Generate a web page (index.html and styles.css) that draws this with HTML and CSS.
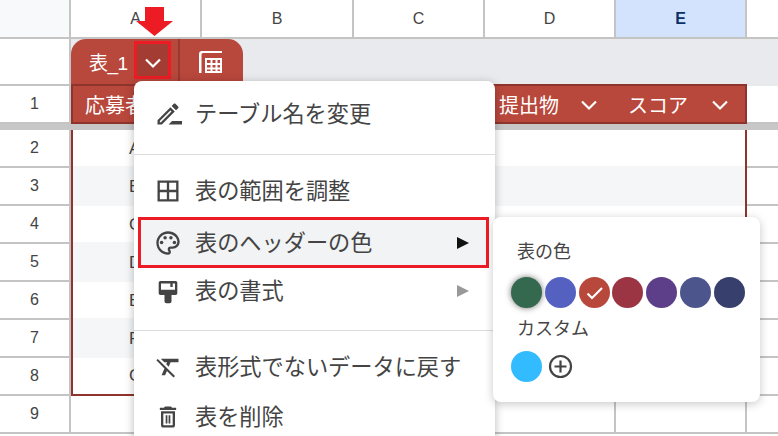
FILE: index.html
```html
<!DOCTYPE html>
<html lang="ja">
<head>
    <meta charset="UTF-8">
    <title>表のヘッダーの色</title>
    <link rel="stylesheet" href="styles.css">
</head>
<body>

<div class="sheet">
    <!-- column letters -->
    <div class="row row-head">
        <div class="num corner"></div>
        <div class="cell">A</div>
        <div class="cell">B</div>
        <div class="cell">C</div>
        <div class="cell">D</div>
        <div class="cell cell-selected">E</div>
        <div class="cell cell-last"></div>
    </div>

    <!-- table tab -->
    <div class="row-tab">
        <div class="num num-tab"></div>
        <div class="band">
            <div class="tab">
                <span class="tab-name">表_1</span>
                <span class="tab-btn">
                    <svg width="18" height="18" viewBox="0 0 18 18"><path class="chev" d="M2 5.500L9 12.500l7-7"/></svg>
                </span>
                <span class="tab-calc">
                    <svg width="26" height="26" viewBox="0 0 26 26" fill="#fff">
                        <path d="M5 2h19v2H5a1.500 1.500 0 0 0-1.500 1.500V24h-2.500V5a3 3 0 0 1 3-3z"/>
                        <path fill-rule="evenodd" d="M7 9h17v15H7zM9 11v3h3.500v-3zM14.500 11v3h3v-3zM19.500 11v3h2.500v-3zM9 16v2.500h3.500V16zM14.500 16v2.500h3V16zM19.500 16v2.500h2.500V16zM9 20.500V22h3.500v-1.500zM14.500 20.500V22h3v-1.500zM19.500 20.500V22h2.500v-1.500z"/>
                    </svg>
                </span>
            </div>
        </div>
    </div>

    <!-- table header -->
    <div class="row row-first">
        <div class="num">1</div>
        <div class="table-head">
            <div class="th"><span>応募者</span></div>
            <div class="th"></div>
            <div class="th"></div>
            <div class="th"><span>提出物</span><svg width="18" height="18" viewBox="0 0 18 18"><path class="chev" d="M2 5.500L9 12.500l7-7"/></svg></div>
            <div class="th th-last"><span>スコア</span><svg width="18" height="18" viewBox="0 0 18 18"><path class="chev" d="M2 5.500L9 12.500l7-7"/></svg></div>
        </div>
        <div class="cell cell-last cell-band"></div>
    </div>

    <div class="freeze"></div>

    <div class="row"><div class="num">2</div><div class="td">A</div><div class="cell cell-last"></div></div>
    <div class="row"><div class="num">3</div><div class="td td-alt">B</div><div class="cell cell-last"></div></div>
    <div class="row"><div class="num">4</div><div class="td">C</div><div class="cell cell-last"></div></div>
    <div class="row"><div class="num">5</div><div class="td td-alt">D</div><div class="cell cell-last"></div></div>
    <div class="row"><div class="num">6</div><div class="td">E</div><div class="cell cell-last"></div></div>
    <div class="row"><div class="num">7</div><div class="td td-alt">F</div><div class="cell cell-last"></div></div>
    <div class="row"><div class="num">8</div><div class="td td-end">G</div><div class="cell cell-last"></div></div>
    <div class="row">
        <div class="num">9</div>
        <div class="cell"></div>
        <div class="cell"></div>
        <div class="cell"></div>
        <div class="cell"></div>
        <div class="cell"></div>
        <div class="cell cell-last"></div>
    </div>

    <!-- red arrow annotation -->
    <svg class="pointer" width="38" height="30" viewBox="0 0 38 30"><polygon points="9,0 28,0 28,14 37,14 18.500,29 0,14 9,14" fill="#ed1c24"/></svg>

    <!-- dropdown menu -->
    <div class="menu">
        <div class="item">
            <svg class="ico" viewBox="0 0 24 24"><path d="M14.060 9.020l.92.92L5.920 19H5v-.92l9.060-9.060M17.660 3c-.25 0-.51.1-.7.29l-1.830 1.830 3.750 3.750 1.830-1.830c.39-.39.39-1.020 0-1.410l-2.340-2.340c-.2-.2-.45-.29-.71-.29zm-3.600 3.190L3 17.250V21h3.750L17.810 9.940l-3.750-3.750z"/><path d="M12.500 21l3-3H24v3z"/></svg>
            <span class="label">テーブル名を変更</span>
        </div>
        <div class="sep sep-first"></div>
        <div class="item">
            <svg class="ico" viewBox="0 0 24 24"><path d="M3 3v18h18V3H3zm8 16H5v-6h6v6zm0-8H5V5h6v6zm8 8h-6v-6h6v6zm0-8h-6V5h6v6z"/></svg>
            <span class="label">表の範囲を調整</span>
        </div>
        <div class="item item-active">
            <svg class="ico" viewBox="0 0 24 24"><path d="M12 22C6.490 22 2 17.510 2 12S6.490 2 12 2s10 4.040 10 9c0 3.310-2.690 6-6 6h-1.770c-.28 0-.5.22-.5.5 0 .12.05.23.13.33.41.47.64 1.060.64 1.670A2.500 2.500 0 0 1 12 22zm0-18c-4.410 0-8 3.590-8 8s3.590 8 8 8c.28 0 .5-.22.5-.5a.54.54 0 0 0-.14-.35c-.41-.46-.63-1.050-.63-1.650a2.500 2.500 0 0 1 2.500-2.500H16c2.210 0 4-1.790 4-4 0-3.860-3.590-7-8-7z"/><circle cx="6.500" cy="11.500" r="1.500"/><circle cx="9.500" cy="7.500" r="1.500"/><circle cx="14.500" cy="7.500" r="1.500"/><circle cx="17.500" cy="11.500" r="1.500"/></svg>
            <span class="label">表のヘッダーの色</span>
            <span class="tri"></span>
        </div>
        <div class="item">
            <svg class="ico" viewBox="0 0 24 24"><path fill-rule="evenodd" d="M5.500 3.500h13a1.500 1.500 0 0 1 1.500 1.500v9a1.500 1.500 0 0 1-1.500 1.500H15v5.500a1.500 1.500 0 0 1-1.500 1.500h-3A1.500 1.500 0 0 1 9 21v-5.500H5.500A1.500 1.500 0 0 1 4 14V5a1.500 1.500 0 0 1 1.500-1.500zM6 5.500V11h12V5.500h-2v3h-2v-3z"/></svg>
            <span class="label">表の書式</span>
            <span class="tri tri-off"></span>
        </div>
        <div class="sep sep-second"></div>
        <div class="item">
            <svg class="ico" viewBox="0 0 24 24"><path d="M6 5v.18L8.820 8h2.400l-.72 1.680 2.100 2.100L14.210 8H21V5H6zm-2.730.04L2 6.310l6.970 6.970L6.500 19h3l1.570-3.660L16.730 21 18 19.730 3.270 5.040z"/></svg>
            <span class="label">表形式でないデータに戻す</span>
        </div>
        <div class="item">
            <svg class="ico" viewBox="0 0 24 24"><path d="M16 9v10H8V9h8m-1.500-6h-5l-1 1H5v2h14V4h-3.500l-1-1zM18 7H6v12c0 1.100.9 2 2 2h8c1.100 0 2-.9 2-2V7z"/><path d="M10 10.500h1.500v7H10zM12.500 10.500H14v7h-1.500z"/></svg>
            <span class="label">表を削除</span>
        </div>
    </div>

    <!-- colour submenu -->
    <div class="submenu">
        <div class="sub-title">表の色</div>
        <div class="swatches">
            <span class="dot dot-hover" style="background:#34684f"></span>
            <span class="dot" style="background:#5561c0"></span>
            <span class="dot" style="background:#b8473c">
                <svg width="31" height="31" viewBox="0 0 31 31"><path d="M8.500 16.500l4.500 4.500 10-10" fill="none" stroke="#fff" stroke-width="2.200"/></svg>
            </span>
            <span class="dot" style="background:#9b3544"></span>
            <span class="dot" style="background:#5d3e88"></span>
            <span class="dot" style="background:#4c568c"></span>
            <span class="dot" style="background:#37406c"></span>
        </div>
        <div class="sub-title sub-title-2">カスタム</div>
        <div class="swatches swatches-custom">
            <span class="dot" style="background:#33bbff"></span>
            <span class="dot">
                <svg width="31" height="31" viewBox="0 0 31 31"><circle cx="15.500" cy="15.500" r="10.500" fill="none" stroke="#444" stroke-width="2.200"/><path d="M15.500 9.500v12M9.500 15.500h12" stroke="#444" stroke-width="2.200"/></svg>
            </span>
        </div>
    </div>
</div>

</body>
</html>
```

FILE: styles.css
```css
html, body {
    margin: 0;
    padding: 0;
    background: #fff;
}
.sheet {
    position: relative;
    width: 778px;
    height: 436px;
    overflow: hidden;
    background: #fff;
    font-family: "Liberation Sans", "Noto Sans CJK JP", sans-serif;
    color: #444;
}
.row {
    display: grid;
    grid-template-columns: 71px 131px 152px 131px 131px 131px 1fr;
    height: 38px;
}
.row-head {
    height: 39px;
}
.row-first {
    height: 40px;
}
.num, .cell {
    box-sizing: border-box;
    display: flex;
    align-items: center;
    justify-content: center;
    border-right: 2px solid #c4c4c4;
    border-bottom: 2px solid #c4c4c4;
    font-size: 16px;
}
.row-first .num {
    padding-bottom: 1px;
    border-top: 2px solid #c4c4c4;
}
.num-tab {
    border-bottom: none;
}
.corner {
    background: #f8f9fa;
}
.cell-selected {
    background: #d3e3fd;
    color: #0b2f66;
    font-weight: bold;
}
.cell-last {
    border-right: none;
}
.cell-band {
    border-top: 2px solid #e8eaed;
}

/* tab row */
.row-tab {
    display: grid;
    grid-template-columns: 71px 1fr;
    height: 45px;
}
.band {
    background: #e8eaed;
}
.tab {
    display: flex;
    align-items: center;
    width: 172px;
    height: 45px;
    padding-left: 18px;
    box-sizing: border-box;
    background: #b8473c;
    border-radius: 15px 15px 0 0;
    color: #fff;
}
.tab-name {
    width: 45px;
    font-size: 19px;
    letter-spacing: -0.5px;
}
.tab-btn {
    box-sizing: border-box;
    display: flex;
    align-items: center;
    justify-content: center;
    width: 37px;
    height: 38px;
    margin-top: -3px;
    padding-top: 5px;
    background: #a33d33;
    border: 3px solid #ed1c24;
}
.tab-calc {
    display: flex;
    align-items: center;
    height: 100%;
    margin-left: 7px;
    padding-left: 18px;
    border-left: 2px solid #963a30;
}
.chev {
    fill: none;
    stroke: #fff;
    stroke-width: 2.200;
}

/* table header row */
.table-head {
    grid-column: 2 / 7;
    display: grid;
    grid-template-columns: 131px 152px 131px 131px 131px;
    box-sizing: border-box;
    background: #b8473c;
    border: 2px solid #8f342c;
    color: #fff;
    font-size: 20px;
}
.th {
    display: flex;
    align-items: center;
    justify-content: space-between;
    padding: 0 20px 0 12px;
}
.th-last {
    padding-left: 10px;
}
.th svg {
    margin-top: 2px;
}
.freeze {
    height: 6px;
    background: #c7c7c7;
}

/* table body */
.td {
    grid-column: 2 / 7;
    box-sizing: border-box;
    display: flex;
    align-items: center;
    padding-left: 56px;
    border-left: 2px solid #8f342c;
    border-right: 2px solid #8f342c;
    font-size: 17px;
}
.td-alt {
    margin-top: -2px;
    padding-top: 2px;
    background: #f5f6f8;
}
.td-end {
    border-bottom: 2px solid #8f342c;
}

.pointer {
    position: absolute;
    left: 136px;
    top: 7px;
}

/* menu */
.menu {
    position: absolute;
    left: 134px;
    top: 81px;
    width: 361px;
    height: 380px;
    padding-top: 8px;
    box-sizing: border-box;
    background: #fff;
    border-radius: 8px;
    box-shadow: 0 2px 10px rgba(0, 0, 0, 0.28);
    font-family: "Noto Sans CJK JP", sans-serif;
    font-size: 22.200px;
    color: #444;
}
.item {
    display: flex;
    align-items: center;
    gap: 13px;
    height: 50px;
    padding-left: 20px;
}
.label {
    margin-bottom: 4px;
}
.item-active {
    box-sizing: border-box;
    height: 51px;
    margin: 1px 6px -2px 4px;
    padding-left: 13px;
    background: #f1f3f4;
    border: 3px solid #ed1c24;
}
.ico {
    flex: none;
    width: 28px;
    height: 28px;
    fill: #444;
}
.tri {
    width: 0;
    height: 0;
    margin-left: auto;
    margin-right: 17px;
    border-left: 12px solid #111;
    border-top: 6px solid transparent;
    border-bottom: 6px solid transparent;
}
.tri-off {
    margin-right: 26px;
    border-left-color: #999;
}
.sep {
    height: 1px;
    background: #dadce0;
}
.sep-first {
    margin: 15px 0 11px;
}
.sep-second {
    margin: 14px 0 11px;
}

/* colour submenu */
.submenu {
    position: absolute;
    left: 493px;
    top: 217px;
    width: 267px;
    height: 185px;
    padding: 21px 0 0 18px;
    box-sizing: border-box;
    background: #fff;
    border-radius: 8px;
    box-shadow: 0 2px 10px rgba(0, 0, 0, 0.22);
    font-family: "Noto Sans CJK JP", sans-serif;
}
.sub-title {
    height: 24px;
    padding-left: 6px;
    font-size: 18px;
    line-height: 24px;
    color: #444;
}
.sub-title-2 {
    margin-top: 7px;
}
.swatches {
    display: flex;
    gap: 2.800px;
    margin-top: 15px;
}
.swatches-custom {
    margin-top: 12px;
}
.dot {
    display: block;
    width: 31px;
    height: 31px;
    border-radius: 50%;
}
.dot svg {
    display: block;
}
.dot-hover {
    box-shadow: 0 0 6px rgba(0, 0, 0, 0.55);
}
```
